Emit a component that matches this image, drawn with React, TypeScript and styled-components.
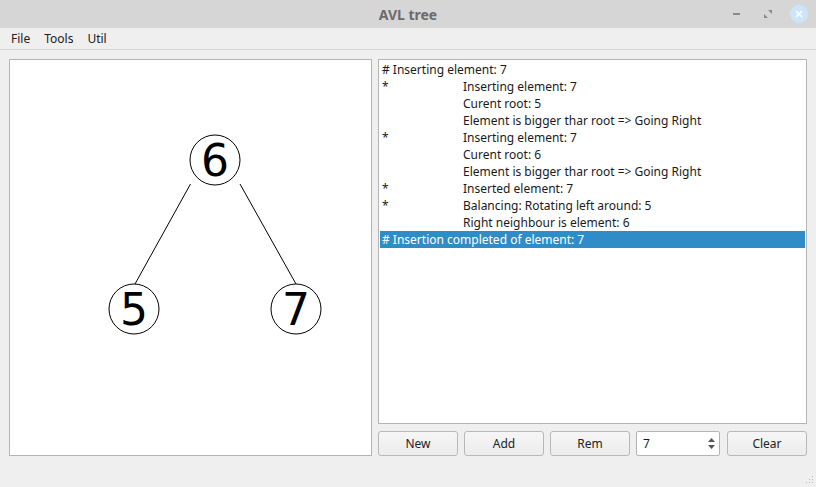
import React from 'react';
import styled, { createGlobalStyle } from 'styled-components';

const GlobalStyle = createGlobalStyle`
  html, body {
    margin: 0;
    padding: 0;
    background: #efefef;
  }
  * {
    box-sizing: border-box;
  }
`;

const Window = styled.div`
  width: 816px;
  height: 487px;
  display: flex;
  flex-direction: column;
  background: #efefef;
  font-family: 'Noto Sans', 'DejaVu Sans', sans-serif;
  font-size: 12px;
  color: #1a1a1a;
  position: relative;
  overflow: hidden;
`;

const TitleBar = styled.div`
  height: 28px;
  flex-shrink: 0;
  background: #d6d6d6;
  display: flex;
  align-items: center;
  justify-content: center;
  position: relative;
`;

const Title = styled.span`
  font-weight: bold;
  font-size: 14px;
  color: #6b6b6b;
`;

const WinButtons = styled.div`
  position: absolute;
  right: 8px;
  top: 5px;
  display: flex;
  align-items: center;
  gap: 13px;
`;

const WinButton = styled.div<{ $close?: boolean }>`
  width: 18px;
  height: 18px;
  border-radius: 50%;
  display: flex;
  align-items: center;
  justify-content: center;
  background: ${p => (p.$close ? '#cbe6fb' : 'transparent')};
`;

const MenuBar = styled.div`
  height: 22px;
  flex-shrink: 0;
  display: flex;
  align-items: center;
  padding-left: 4px;
  border-bottom: 1px solid #d4d4d4;
  background: #efefef;
`;

const MenuItem = styled.span`
  padding: 0 7px;
  color: #202020;
`;

const Body = styled.div`
  flex: 1;
  min-height: 0;
  display: flex;
  gap: 6px;
  padding: 9px 9px 31px 9px;
`;

const Canvas = styled.div`
  width: 363px;
  background: #fff;
  border: 1px solid #b4b4b4;
  overflow: hidden;

  & > svg {
    display: block;
  }
`;

const RightColumn = styled.div`
  flex: 1;
  display: flex;
  flex-direction: column;
  gap: 7px;
`;

const LogList = styled.div`
  flex: 1;
  background: #fff;
  border: 1px solid #b4b4b4;
  padding: 1px;
`;

const LogRow = styled.div<{ $selected?: boolean }>`
  height: 17px;
  line-height: 17px;
  display: flex;
  padding-left: 2px;
  white-space: nowrap;
  background: ${p => (p.$selected ? '#308cc6' : 'transparent')};
  color: ${p => (p.$selected ? '#fff' : '#1a1a1a')};
`;

const Bullet = styled.span`
  width: 81px;
  flex-shrink: 0;
`;

const ButtonRow = styled.div`
  height: 25px;
  flex-shrink: 0;
  display: flex;
  gap: 6px;
`;

const PushButton = styled.button`
  width: 80px;
  height: 25px;
  border: 1px solid #b8b8b8;
  border-radius: 3px;
  background: linear-gradient(#f6f6f6, #ececec);
  font-family: inherit;
  font-size: 12px;
  color: #222;
  padding: 0;
`;

const SpinBox = styled.div`
  width: 84px;
  height: 25px;
  border: 1px solid #b4b4b4;
  border-radius: 2px;
  background: #fff;
  display: flex;
  align-items: center;
  justify-content: space-between;
  padding: 0 4px 0 6px;
  margin-right: 1px;
`;

const Arrows = styled.div`
  display: flex;
  flex-direction: column;
  gap: 3px;
  align-items: center;
`;

const Grip = styled.svg`
  position: absolute;
  right: 2px;
  bottom: 2px;
`;

const log: { bullet: string; text: string; full?: boolean; selected?: boolean }[] = [
  { bullet: '', text: '# Inserting element: 7', full: true },
  { bullet: '*', text: 'Inserting element: 7' },
  { bullet: '', text: 'Curent root: 5' },
  { bullet: '', text: 'Element is bigger thar root => Going Right' },
  { bullet: '*', text: 'Inserting element: 7' },
  { bullet: '', text: 'Curent root: 6' },
  { bullet: '', text: 'Element is bigger thar root => Going Right' },
  { bullet: '*', text: 'Inserted element: 7' },
  { bullet: '*', text: 'Balancing: Rotating left around: 5' },
  { bullet: '', text: 'Right neighbour is element: 6' },
  { bullet: '', text: '# Insertion completed of element: 7', full: true, selected: true },
];

const nodes = [
  { v: 6, x: 205, y: 100 },
  { v: 5, x: 124, y: 249 },
  { v: 7, x: 286, y: 249 },
];

const Tree: React.FC = () => (
  <svg width="361" height="395" viewBox="0 0 361 395">
    <line x1="180.5" y1="124" x2="125" y2="224" stroke="#000" strokeWidth="1" />
    <line x1="230" y1="124" x2="286" y2="224" stroke="#000" strokeWidth="1" />
    {nodes.map(n => (
      <g key={n.v}>
        <circle cx={n.x} cy={n.y} r="25" fill="#fff" stroke="#000" strokeWidth="1" />
        <text
          x={n.x}
          y={n.y + 16}
          textAnchor="middle"
          fontFamily="'DejaVu Sans', sans-serif"
          fontSize="44"
          fill="#000"
        >
          {n.v}
        </text>
      </g>
    ))}
  </svg>
);

const App: React.FC = () => {
  return (
    <Window>
      <GlobalStyle />
      <TitleBar>
        <Title>AVL tree</Title>
        <WinButtons>
          <WinButton>
            <svg width="10" height="10" viewBox="0 0 10 10">
              <rect x="1" y="4" width="7" height="2" fill="#8a8a8a" />
            </svg>
          </WinButton>
          <WinButton>
            <svg width="10" height="10" viewBox="0 0 10 10">
              <path d="M5 1 L9 1 L9 5 Z M1 5 L1 9 L5 9 Z" fill="#8a8a8a" />
            </svg>
          </WinButton>
          <WinButton $close>
            <svg width="8" height="8" viewBox="0 0 8 8">
              <path d="M1 1 L7 7 M7 1 L1 7" stroke="#fff" strokeWidth="1.6" />
            </svg>
          </WinButton>
        </WinButtons>
      </TitleBar>
      <MenuBar>
        <MenuItem>File</MenuItem>
        <MenuItem>Tools</MenuItem>
        <MenuItem>Util</MenuItem>
      </MenuBar>
      <Body>
        <Canvas>
          <Tree />
        </Canvas>
        <RightColumn>
          <LogList>
            {log.map((r, i) => (
              <LogRow key={i} $selected={r.selected}>
                {r.full ? (
                  r.text
                ) : (
                  <>
                    <Bullet>{r.bullet}</Bullet>
                    <span>{r.text}</span>
                  </>
                )}
              </LogRow>
            ))}
          </LogList>
          <ButtonRow>
            <PushButton>New</PushButton>
            <PushButton>Add</PushButton>
            <PushButton>Rem</PushButton>
            <SpinBox>
              <span>7</span>
              <Arrows>
                <svg width="7" height="4" viewBox="0 0 7 4">
                  <path d="M0 4 L3.5 0 L7 4 Z" fill="#555" />
                </svg>
                <svg width="7" height="4" viewBox="0 0 7 4">
                  <path d="M0 0 L3.5 4 L7 0 Z" fill="#555" />
                </svg>
              </Arrows>
            </SpinBox>
            <PushButton>Clear</PushButton>
          </ButtonRow>
        </RightColumn>
      </Body>
      <Grip width="10" height="10" viewBox="0 0 10 10">
        {[
          [8, 1], [5, 4], [8, 4], [2, 7], [5, 7], [8, 7],
        ].map(([x, y], i) => (
          <rect key={i} x={x} y={y} width="1" height="1" fill="#b8b8b8" />
        ))}
      </Grip>
    </Window>
  );
};

export default App;
